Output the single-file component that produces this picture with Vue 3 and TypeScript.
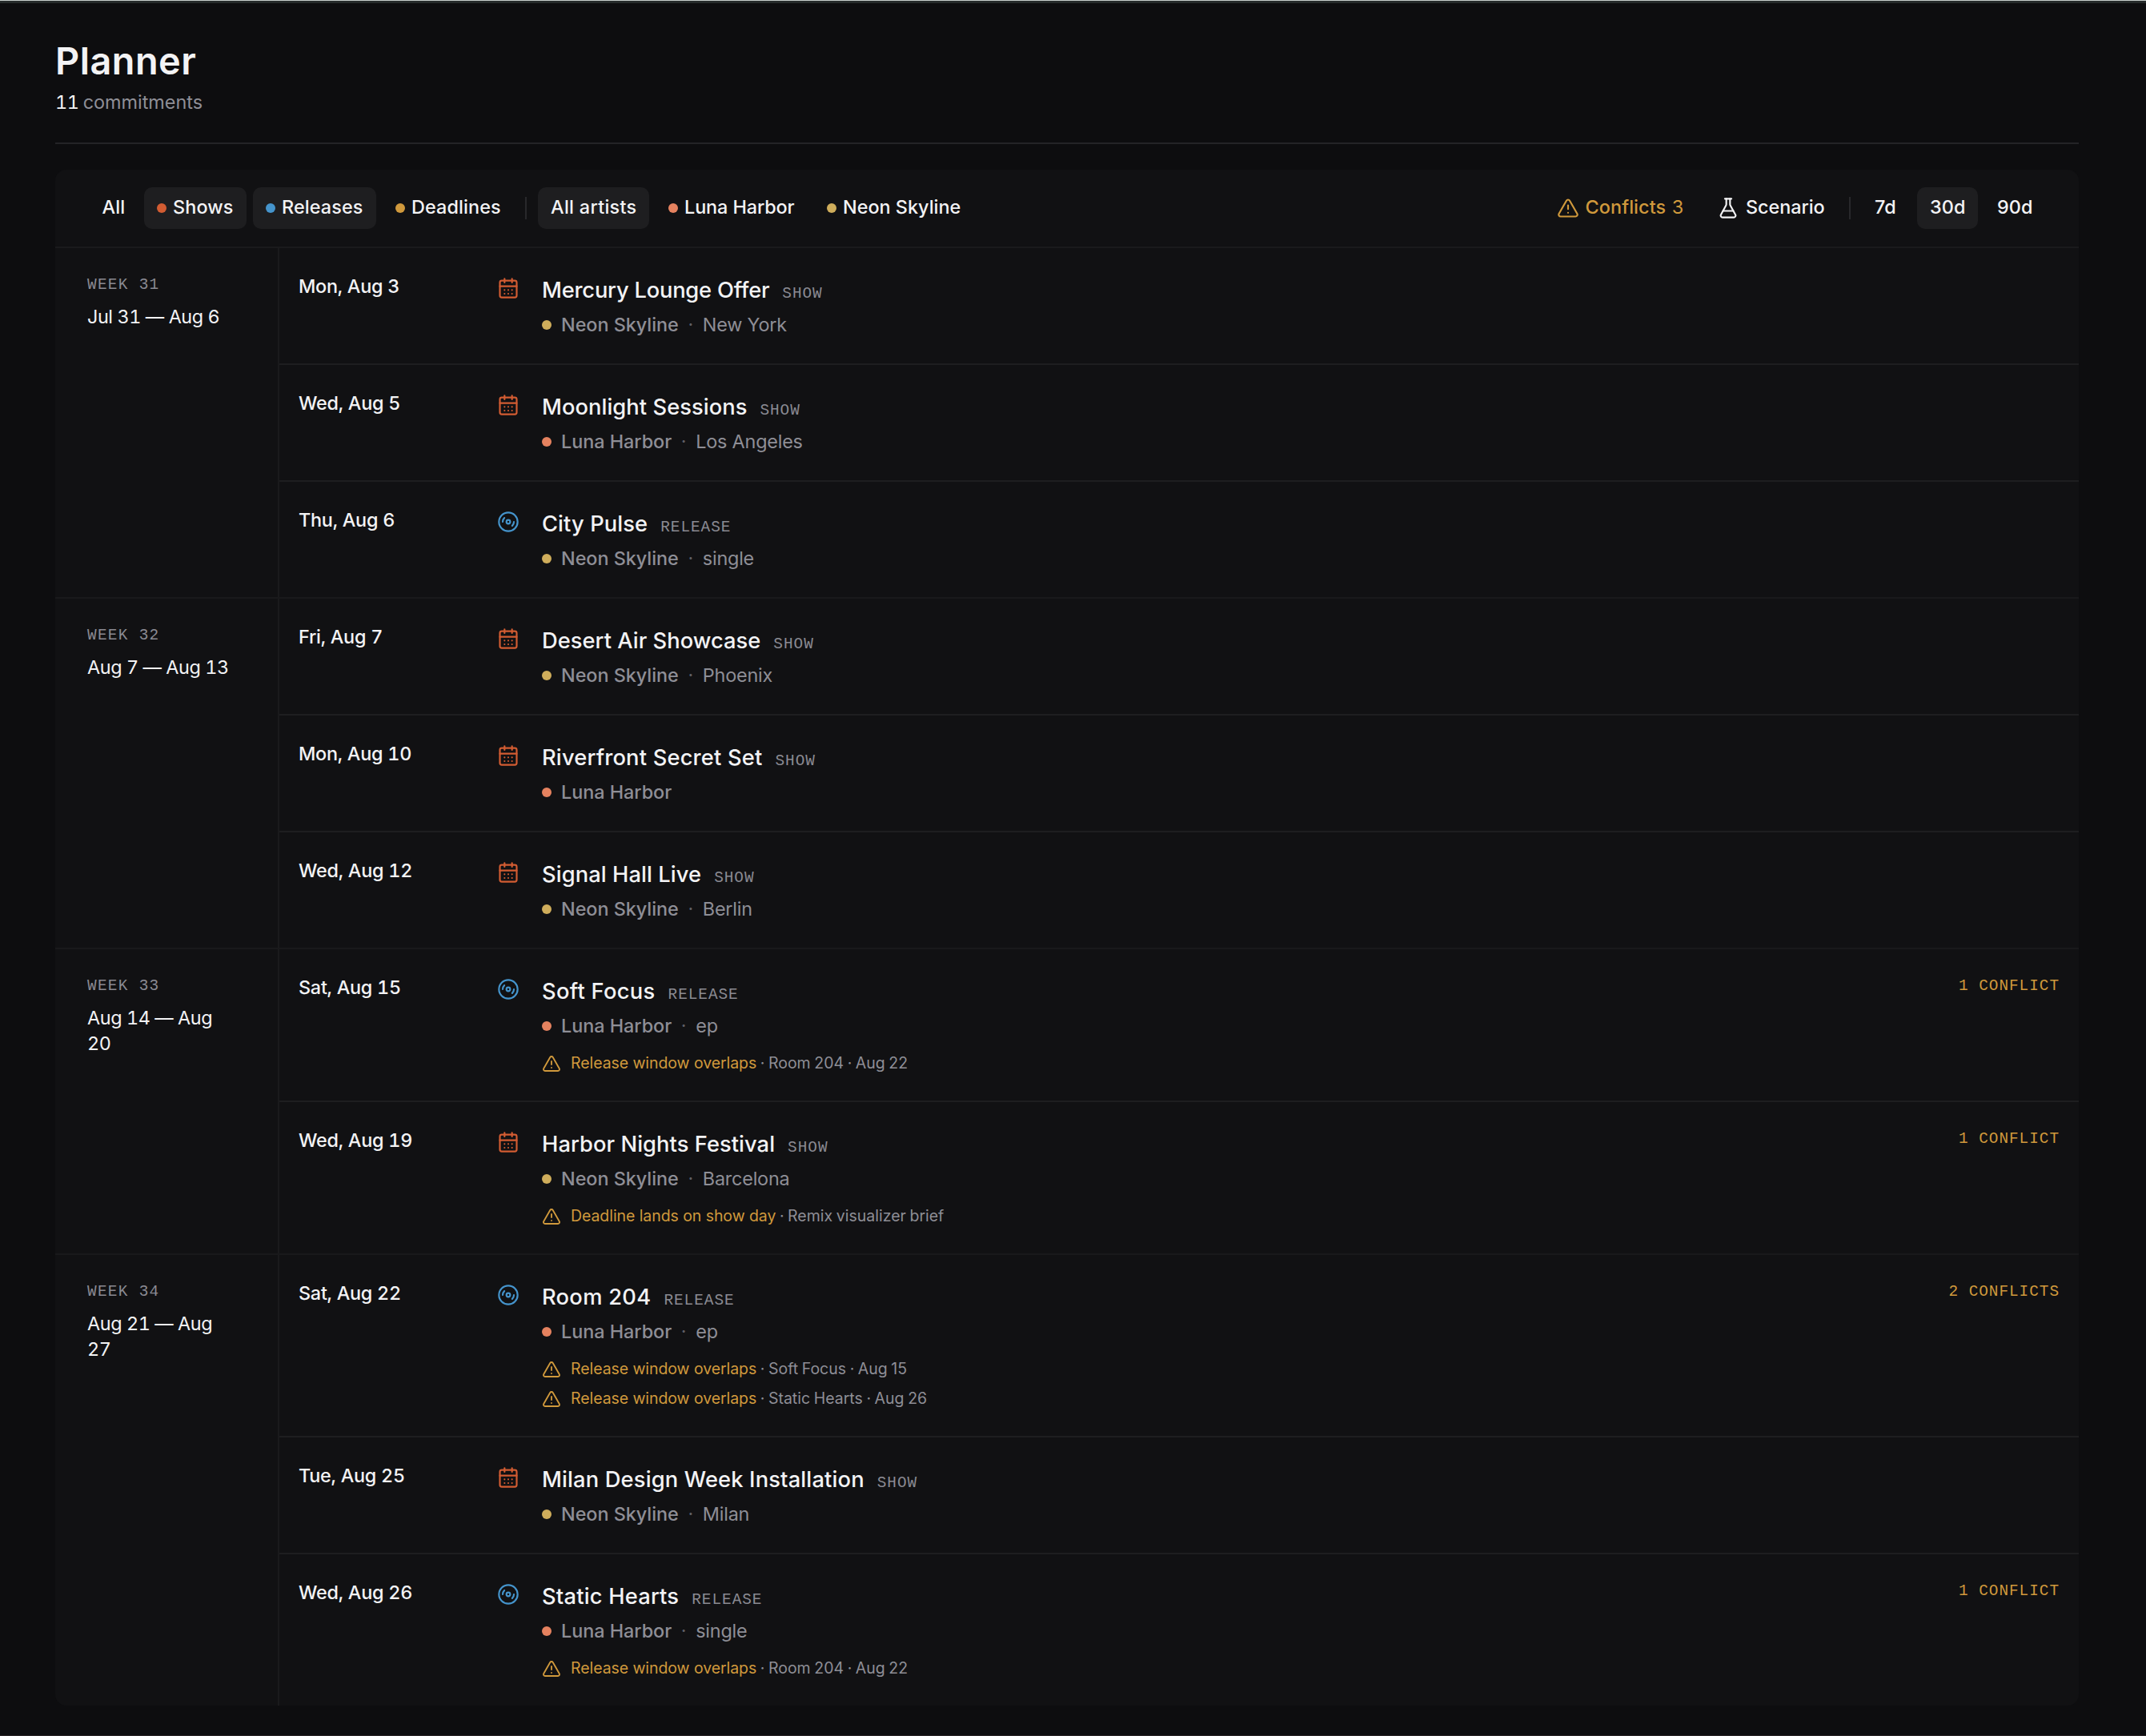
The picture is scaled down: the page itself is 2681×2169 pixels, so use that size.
<script setup lang="ts">
type Kind = 'show' | 'release'
type Artist = 'luna' | 'neon'

interface Alert {
  label: string
  rest: string[]
}

interface Commitment {
  date: string
  kind: Kind
  title: string
  // optical tracking of the title, in px
  track: number
  artist: Artist
  detail?: string
  alerts?: Alert[]
}

interface Week {
  label: string
  range: string
  items: Commitment[]
}

const artistNames: Record<Artist, string> = {
  luna: 'Luna Harbor',
  neon: 'Neon Skyline',
}

const kinds = [
  { id: 'all', name: 'All', active: false, dot: false },
  { id: 'shows', name: 'Shows', active: true, dot: true },
  { id: 'releases', name: 'Releases', active: true, dot: true },
  { id: 'deadlines', name: 'Deadlines', active: false, dot: true },
]

const artists = [
  { id: 'everyone', name: 'All artists', active: true, dot: false },
  { id: 'luna', name: 'Luna Harbor', active: false, dot: true },
  { id: 'neon', name: 'Neon Skyline', active: false, dot: true },
]

const ranges = [
  { id: 'd7', name: '7d', active: false },
  { id: 'd30', name: '30d', active: true },
  { id: 'd90', name: '90d', active: false },
]

const overlap = 'Release window overlaps'

const weeks: Week[] = [
  {
    label: 'Week 31',
    range: 'Jul 31 — Aug 6',
    items: [
      { date: 'Mon, Aug 3', kind: 'show', title: 'Mercury Lounge Offer', track: -0.21, artist: 'neon', detail: 'New York' },
      { date: 'Wed, Aug 5', kind: 'show', title: 'Moonlight Sessions', track: 0.05, artist: 'luna', detail: 'Los Angeles' },
      { date: 'Thu, Aug 6', kind: 'release', title: 'City Pulse', track: 0.09, artist: 'neon', detail: 'single' },
    ],
  },
  {
    label: 'Week 32',
    range: 'Aug 7 — Aug 13',
    items: [
      { date: 'Fri, Aug 7', kind: 'show', title: 'Desert Air Showcase', track: 0.03, artist: 'neon', detail: 'Phoenix' },
      { date: 'Mon, Aug 10', kind: 'show', title: 'Riverfront Secret Set', track: 0.18, artist: 'luna' },
      { date: 'Wed, Aug 12', kind: 'show', title: 'Signal Hall Live', track: 0.08, artist: 'neon', detail: 'Berlin' },
    ],
  },
  {
    label: 'Week 33',
    range: 'Aug 14 — Aug 20',
    items: [
      {
        date: 'Sat, Aug 15', kind: 'release', title: 'Soft Focus', track: 0.3, artist: 'luna', detail: 'ep',
        alerts: [{ label: overlap, rest: ['Room 204', 'Aug 22'] }],
      },
      {
        date: 'Wed, Aug 19', kind: 'show', title: 'Harbor Nights Festival', track: 0.06, artist: 'neon', detail: 'Barcelona',
        alerts: [{ label: 'Deadline lands on show day', rest: ['Remix visualizer brief'] }],
      },
    ],
  },
  {
    label: 'Week 34',
    range: 'Aug 21 — Aug 27',
    items: [
      {
        date: 'Sat, Aug 22', kind: 'release', title: 'Room 204', track: 0.28, artist: 'luna', detail: 'ep',
        alerts: [
          { label: overlap, rest: ['Soft Focus', 'Aug 15'] },
          { label: overlap, rest: ['Static Hearts', 'Aug 26'] },
        ],
      },
      { date: 'Tue, Aug 25', kind: 'show', title: 'Milan Design Week Installation', track: 0.15, artist: 'neon', detail: 'Milan' },
      {
        date: 'Wed, Aug 26', kind: 'release', title: 'Static Hearts', track: 0.2, artist: 'luna', detail: 'single',
        alerts: [{ label: overlap, rest: ['Room 204', 'Aug 22'] }],
      },
    ],
  },
]

const total = weeks.reduce((sum, week) => sum + week.items.length, 0)

const conflictText = (count: number) => `${count} ${count === 1 ? 'conflict' : 'conflicts'}`
</script>

<template>
  <div class="page">
    <header class="head">
      <h1>Planner</h1>
      <p><strong>{{ total }}</strong> commitments</p>
    </header>

    <main class="card">
      <div class="toolbar">
        <div class="group">
          <button v-for="k in kinds" :key="k.id" class="chip" :class="[k.id, { active: k.active }]">
            <i v-if="k.dot" class="dot"></i><span>{{ k.name }}</span>
          </button>
          <span class="divider"></span>
          <button v-for="a in artists" :key="a.id" class="chip" :class="[a.id, { active: a.active }]">
            <i v-if="a.dot" class="dot"></i><span>{{ a.name }}</span>
          </button>
        </div>
        <div class="group">
          <button class="chip conflicts">
            <svg class="icon" viewBox="0 0 24 24">
              <path d="m21.73 18-8-14a2 2 0 0 0-3.48 0l-8 14A2 2 0 0 0 4 21h16a2 2 0 0 0 1.73-3" />
              <path d="M12 9v4M12 17h.01" />
            </svg>
            <span>Conflicts</span><span class="count">3</span>
          </button>
          <button class="chip scenario">
            <svg class="icon" viewBox="0 0 24 24">
              <path d="M14 2v6a2 2 0 0 0 .245.96l5.51 10.08A2 2 0 0 1 18 22H6a2 2 0 0 1-1.755-2.96l5.51-10.08A2 2 0 0 0 10 8V2" />
              <path d="M6.453 15h11.094M8.5 2h7" />
            </svg>
            <span>Scenario</span>
          </button>
          <span class="divider"></span>
          <button v-for="r in ranges" :key="r.id" class="chip" :class="[r.id, { active: r.active }]">
            <span>{{ r.name }}</span>
          </button>
        </div>
      </div>

      <section v-for="week in weeks" :key="week.label" class="week">
        <aside class="week-info">
          <div class="week-label">{{ week.label }}</div>
          <div class="week-range">{{ week.range }}</div>
        </aside>
        <div class="rows">
          <article v-for="item in week.items" :key="item.title" class="row">
            <time class="date">{{ item.date }}</time>
            <svg v-if="item.kind === 'show'" class="icon kind show" viewBox="0 0 24 24">
              <path d="M8 2v4M16 2v4M3 10h18" />
              <rect x="3" y="4" width="18" height="18" rx="2" />
              <path d="M8 14h.01M12 14h.01M16 14h.01M8 18h.01M12 18h.01M16 18h.01" />
            </svg>
            <svg v-else class="icon kind release" viewBox="0 0 24 24">
              <circle cx="12" cy="12" r="10" />
              <path d="M6 12c0-1.7.7-3.2 1.8-4.2" />
              <circle cx="12" cy="12" r="2" />
              <path d="M18 12c0 1.7-.7 3.2-1.8 4.2" />
            </svg>
            <div class="body">
              <div class="title-line">
                <h2 :style="{ letterSpacing: item.track + 'px' }">{{ item.title }}</h2>
                <span class="tag">{{ item.kind }}</span>
              </div>
              <div class="meta">
                <i class="dot" :class="item.artist"></i>
                <span class="artist">{{ artistNames[item.artist] }}</span>
                <template v-if="item.detail">
                  <span class="sep">·</span>
                  <span class="detail">{{ item.detail }}</span>
                </template>
              </div>
              <ul v-if="item.alerts" class="alerts">
                <li v-for="(alert, n) in item.alerts" :key="n">
                  <svg class="icon" viewBox="0 0 24 24">
                    <path d="m21.73 18-8-14a2 2 0 0 0-3.48 0l-8 14A2 2 0 0 0 4 21h16a2 2 0 0 0 1.73-3" />
                    <path d="M12 9v4M12 17h.01" />
                  </svg>
                  <span class="alert-text"><b>{{ alert.label }}</b><template v-for="part in alert.rest" :key="part"> · {{ part }}</template></span>
                </li>
              </ul>
            </div>
            <div v-if="item.alerts" class="flag">{{ conflictText(item.alerts.length) }}</div>
          </article>
        </div>
      </section>
    </main>
  </div>
</template>

<style>
body {
  background: #0d0d0f;
}
</style>

<style scoped>
.page {
  box-sizing: border-box;
  width: 2681px;
  height: 2169px;
  padding: 47px 84px 0 69px;
  overflow: hidden;
  background: #0d0d0f;
  border-top: 1px solid #c9cfcc;
  border-bottom: 1px solid #2a2526;
  box-shadow: inset 0 3px 0 #262b2b;
  color: #f3f3f5;
  font-family: Inter, "Liberation Sans", sans-serif;
  font-size: 23.4px;
}
h1, h2, p, ul { margin: 0; padding: 0; }
.head {
  height: 130px;
  border-bottom: 2px solid #242427;
}
h1 {
  font-size: 46.8px;
  line-height: 56px;
  font-weight: 600;
  letter-spacing: 0.5px;
}
.head p {
  margin-top: 8px;
  line-height: 32px;
  color: #8e8e96;
}
.head strong {
  margin-right: -1.5px;
  font-weight: 400;
  letter-spacing: -0.4px;
  color: #f3f3f5;
  font-variant-numeric: tabular-nums;
}
.card {
  margin-top: 32px;
  border-radius: 14px;
  background: #111113;
  overflow: hidden;
}
.toolbar {
  box-sizing: border-box;
  height: 98px;
  padding: 0 41px;
  display: flex;
  align-items: center;
  justify-content: space-between;
  border-bottom: 2px solid #1a1a1c;
}
.group {
  display: flex;
  align-items: center;
  gap: 8px;
}
.chip {
  box-sizing: border-box;
  height: 52px;
  padding: 0 16px;
  display: flex;
  align-items: center;
  gap: 8px;
  border: 0;
  border-radius: 10px;
  background: transparent;
  color: #f3f3f5;
  font: 500 23.4px/32px Inter, "Liberation Sans", sans-serif;
  letter-spacing: 0.1px;
  white-space: nowrap;
}
.chip span { padding-bottom: 2px; }
.chip.active { background: #1e1e20; }
.dot {
  flex: none;
  width: 12px;
  height: 12px;
  border-radius: 50%;
}
.all { width: 62px; padding-left: 17.5px; }
.shows { width: 128px; }
.releases { width: 154px; }
.deadlines { width: 164px; }
.everyone { width: 139px; letter-spacing: 0.3px; }
.chip.luna { width: 190px; letter-spacing: -0.1px; }
.chip.neon { letter-spacing: 0; }
.shows .dot { background: #d25c32; }
.releases .dot { background: #4594cc; }
.deadlines .dot { background: #d0993c; }
.luna .dot, .dot.luna { background: #e5825f; }
.neon .dot, .dot.neon { background: #cfad5b; }
.divider {
  width: 2px;
  height: 28px;
  margin: 0 6px;
  background: #28282b;
}
.icon {
  flex: none;
  width: 28px;
  height: 28px;
  fill: none;
  stroke: currentColor;
  stroke-width: 1.85;
  stroke-linecap: round;
  stroke-linejoin: round;
}
.chip.conflicts { width: 191px; gap: 7.5px; color: #d0993c; }
.count { font-weight: 400; }
.chip.scenario { width: 168px; padding-left: 17px; letter-spacing: -0.05px; }
.d7 { width: 61px; }
.d30 { width: 76px; }
.d90 { width: 77px; }
.week {
  display: flex;
  border-bottom: 2px solid #19191b;
}
.week:last-child { border-bottom: 0; }
.week-info {
  box-sizing: border-box;
  flex: none;
  width: 280px;
  padding: 34px 60px 0 40px;
  border-right: 2px solid #1a1a1c;
}
.week-label, .tag, .flag {
  font: 400 19.4px/24px "Liberation Mono", monospace;
  letter-spacing: 0.96px;
  text-transform: uppercase;
  color: #8a8a92;
}
.week-label { letter-spacing: 1.3px; }
.week-range {
  margin-top: 12px;
  line-height: 32px;
  letter-spacing: -0.42px;
  font-variant-numeric: tabular-nums;
}
.rows {
  flex: 1;
}
.row {
  display: flex;
  padding: 32px 24px 30px;
  border-bottom: 2px solid #1e1e20;
}
.row:last-child { border-bottom: 0; }
.date {
  width: 248px;
  font-weight: 500;
  line-height: 32px;
  letter-spacing: -0.25px;
  font-variant-numeric: tabular-nums;
}
.kind {
  margin: 4px 28px 0 0;
}
.show { color: #d25c32; }
.release { color: #4594cc; }
.body { flex: 1; }
.title-line {
  display: flex;
  align-items: baseline;
  gap: 16px;
  height: 40px;
  padding-top: 1px;
}
h2 {
  font-size: 27.3px;
  line-height: 40px;
  font-weight: 500;
}
.meta {
  margin-top: 5px;
  display: flex;
  align-items: center;
  height: 36px;
  line-height: 36px;
  color: #8e8e96;
}
.meta .dot { margin-right: 12px; }
.artist { font-weight: 500; letter-spacing: -0.04px; }
.sep {
  width: 30px;
  text-align: center;
  color: #5f5f66;
}
.detail {
  letter-spacing: -0.2px;
}
.alerts {
  margin: 10px 0 -2px;
  list-style: none;
  font-size: 19.5px;
  line-height: 37px;
  color: #8e8e96;
}
.alerts li {
  display: flex;
  align-items: center;
  gap: 12px;
  height: 37px;
}
.alert-text { word-spacing: -0.9px; }
.alerts .icon {
  width: 24px;
  height: 24px;
  color: #d0993c;
}
.alerts b {
  font-weight: 400;
  word-spacing: 0;
  letter-spacing: -0.07px;
  color: #d0993c;
}
.flag {
  margin-top: 2px;
  color: #d0993c;
}
</style>
